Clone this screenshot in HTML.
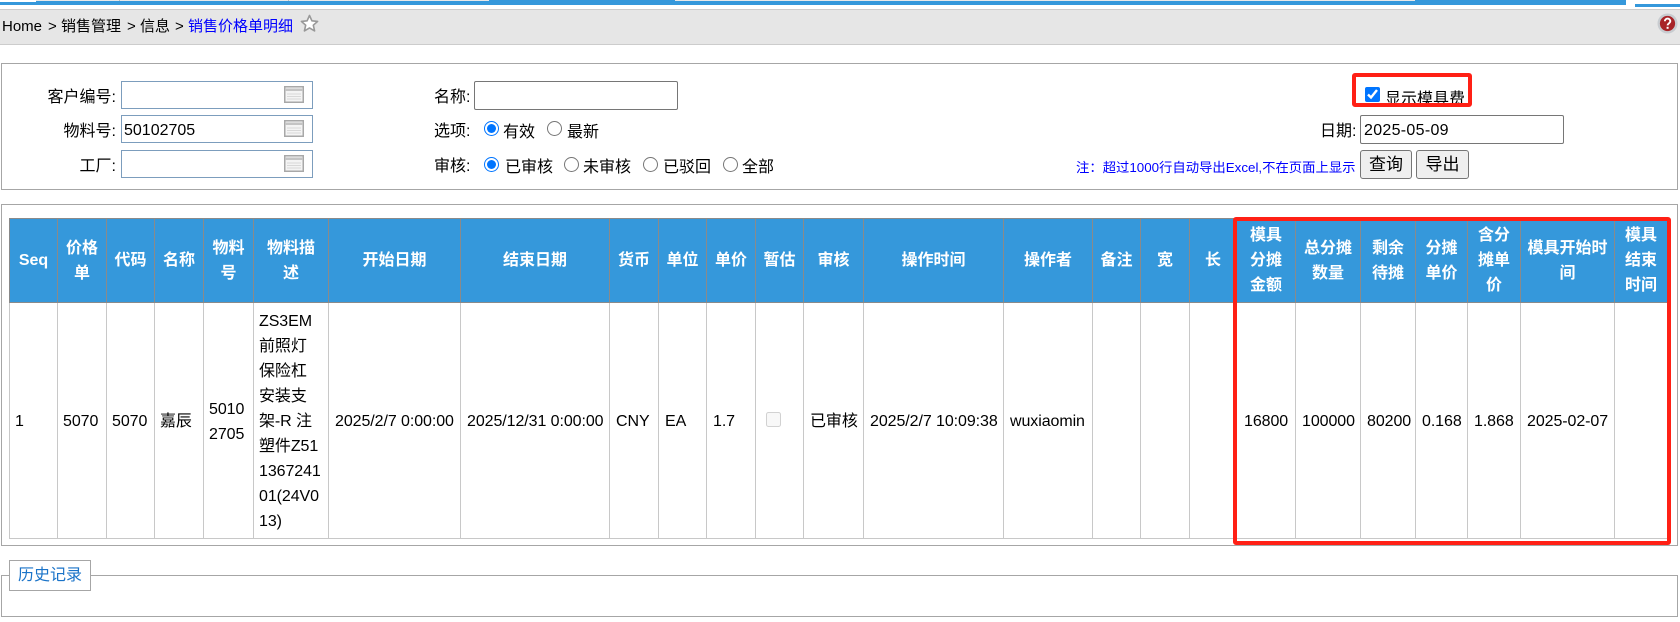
<!DOCTYPE html>
<html lang="zh">
<head>
<meta charset="utf-8">
<title>销售价格单明细</title>
<style>
html,body{margin:0;padding:0;background:#fff;width:1680px;height:622px;overflow:hidden}
body{position:relative;font-family:"Liberation Sans","Noto Sans CJK SC",sans-serif;font-size:16px;color:#000}
.a{position:absolute}
.t{position:absolute;white-space:nowrap;line-height:20px;height:20px}
.r{text-align:right}
.panel{position:absolute;border:1px solid #a6a6a6;box-sizing:border-box;background:#fff}
.ib{position:absolute;box-sizing:border-box;left:121px;width:192px;height:28px;border:1px solid #7c9dbd;background:#fff}
.in{position:absolute;box-sizing:border-box;border:1px solid #767676;border-radius:2px;background:#fff}
.btn{position:absolute;box-sizing:border-box;top:150px;height:29px;border:1px solid #767676;border-radius:3px;background:#efefef;text-align:center;line-height:27px;font-size:17px}
input{position:absolute;margin:0;width:15px;height:15px}
table{position:absolute;left:9px;top:218px;border-collapse:collapse;table-layout:fixed;width:1658px}
th{background:#3598db;color:#fff;font-size:16px;font-weight:bold;border:1px solid #8a8a8a;height:83px;padding:0 2px;line-height:25px;text-align:center;white-space:nowrap;overflow:hidden}
td{border:1px solid #c8c8c8;height:233px;padding:2px 0 0 6px;line-height:25px;white-space:nowrap;vertical-align:middle;font-size:16px;letter-spacing:-.08px;overflow:hidden}
td:nth-child(-n+6){padding-left:5px}
td:nth-child(19){padding-left:7px}
</style>
</head>
<body>
<!-- top tab strip -->
<div class="a" style="left:0;top:2px;width:36px;height:3px;background:#3598db"></div>
<div class="a" style="left:36px;top:1px;width:1379px;height:4px;background:#3598db"></div>
<div class="a" style="left:489px;top:0;width:186px;height:1px;background:#3598db"></div>
<div class="a" style="left:1415px;top:0;width:211px;height:5px;background:#3598db"></div>
<div class="a" style="left:36px;top:0;width:453px;height:1px;background:#e8e8e8"></div>
<div class="a" style="left:675px;top:0;width:740px;height:1px;background:#e8e8e8"></div>
<div class="a" style="left:119px;top:0;width:1px;height:1px;background:#bbb"></div>
<div class="a" style="left:288px;top:0;width:1px;height:1px;background:#bbb"></div>
<div class="a" style="left:1635px;top:4px;width:45px;height:3px;background:#3598db"></div>
<!-- breadcrumb -->
<div class="a" style="left:0;top:9px;width:1680px;height:36px;box-sizing:border-box;background:#e6e6e6;border-top:1px solid #ccc;border-bottom:1px solid #ccc"></div>
<div class="t" style="left:2px;top:17px;font-size:15px">Home</div>
<div class="t" style="left:48px;top:17px;font-size:15px">&gt;</div>
<div class="t" style="left:61px;top:17px;font-size:15px">销售管理</div>
<div class="t" style="left:127px;top:17px;font-size:15px">&gt;</div>
<div class="t" style="left:140px;top:17px;font-size:15px">信息</div>
<div class="t" style="left:175px;top:17px;font-size:15px">&gt;</div>
<div class="t" style="left:188px;top:17px;font-size:15px;color:#00f">销售价格单明细</div>
<svg class="a" style="left:300px;top:14px" width="19" height="19" viewBox="0 0 19 19"><path d="M9.5 1.5l2.4 5.3 5.7.6-4.3 3.8 1.3 5.7-5.1-3-5.1 3 1.3-5.7L1.400 7.400l5.700-.6z" fill="#fff" stroke="#999" stroke-width="1.600" stroke-linejoin="round"/></svg>
<svg class="a" style="left:1657px;top:13px" width="21" height="21" viewBox="0 0 21 21"><circle cx="10.500" cy="10.500" r="10" fill="#c8ccd0"/><circle cx="10.500" cy="10.500" r="7.600" fill="#a82428"/><path d="M7.900 8.300c0-3.600 5.400-3.600 5.400 0 0 2.100-2.700 2.100-2.700 4.100" fill="none" stroke="#fff" stroke-width="1.900"/><rect x="9.600" y="13.800" width="2" height="2" fill="#fff"/></svg>

<!-- filter panel -->
<div class="panel" style="left:1px;top:63px;width:1677px;height:127px"></div>
<div class="t r" style="right:1564px;top:88px">客户编号:</div>
<div class="t r" style="right:1564px;top:122px">物料号:</div>
<div class="t r" style="right:1564px;top:157px">工厂:</div>
<div class="ib" style="top:81px"></div>
<div class="ib" style="top:115px"></div>
<div class="ib" style="top:150px"></div>
<div class="t" style="left:124px;top:121px">50102705</div>
<svg class="a" style="left:284px;top:86px" width="20" height="17" viewBox="0 0 20 17"><rect x=".75" y=".75" width="18.500" height="15.500" fill="#f4f4f4" stroke="#a8a8a8" stroke-width="1.500"/><rect x="1" y="2.500" width="18" height="2.500" fill="#c4c4c4"/><path d="M3 8h14M3 10.500h14M3 13h14" stroke="#d8d8d8"/></svg>
<svg class="a" style="left:284px;top:120px" width="20" height="17" viewBox="0 0 20 17"><rect x=".75" y=".75" width="18.500" height="15.500" fill="#f4f4f4" stroke="#a8a8a8" stroke-width="1.500"/><rect x="1" y="2.500" width="18" height="2.500" fill="#c4c4c4"/><path d="M3 8h14M3 10.500h14M3 13h14" stroke="#d8d8d8"/></svg>
<svg class="a" style="left:284px;top:155px" width="20" height="17" viewBox="0 0 20 17"><rect x=".75" y=".75" width="18.500" height="15.500" fill="#f4f4f4" stroke="#a8a8a8" stroke-width="1.500"/><rect x="1" y="2.500" width="18" height="2.500" fill="#c4c4c4"/><path d="M3 8h14M3 10.500h14M3 13h14" stroke="#d8d8d8"/></svg>

<div class="t" style="left:434px;top:88px">名称:</div>
<div class="in" style="left:474px;top:81px;width:204px;height:29px"></div>
<div class="t" style="left:434px;top:122px">选项:</div>
<input type="radio" name="a" checked style="left:484px;top:121px">
<div class="t" style="left:503px;top:123px">有效</div>
<input type="radio" name="a" style="left:547px;top:121px">
<div class="t" style="left:567px;top:123px">最新</div>
<div class="t" style="left:434px;top:157px">审核:</div>
<input type="radio" name="b" checked style="left:484px;top:157px">
<div class="t" style="left:505px;top:158px">已审核</div>
<input type="radio" name="b" style="left:564px;top:157px">
<div class="t" style="left:583px;top:158px">未审核</div>
<input type="radio" name="b" style="left:643px;top:157px">
<div class="t" style="left:663px;top:158px">已驳回</div>
<input type="radio" name="b" style="left:723px;top:157px">
<div class="t" style="left:742px;top:158px">全部</div>

<div class="t" style="left:1076px;top:158px;font-size:13.350px;color:#00f">注：超过1000行自动导出Excel,不在页面上显示</div>
<div class="t" style="left:1320px;top:122px">日期:</div>
<div class="in" style="left:1360px;top:115px;width:204px;height:29px"></div>
<div class="t" style="left:1364px;top:121px;letter-spacing:.3px">2025-05-09</div>
<div class="btn" style="left:1360px;width:52px">查询</div>
<div class="btn" style="left:1416px;width:53px">导出</div>
<input type="checkbox" checked style="left:1365px;top:87px">
<div class="t" style="left:1385px;top:90px">显示模具费</div>
<div class="a" style="left:1352px;top:73px;width:120px;height:34px;box-sizing:border-box;border:4px solid #ff2015;border-radius:3px"></div>

<!-- data panel -->
<div class="panel" style="left:1px;top:204px;width:1677px;height:342px"></div>
<table>
<colgroup>
<col style="width:48px"><col style="width:49px"><col style="width:48px"><col style="width:49px"><col style="width:50px"><col style="width:75px"><col style="width:132px"><col style="width:149px"><col style="width:49px"><col style="width:48px"><col style="width:49px"><col style="width:48px"><col style="width:60px"><col style="width:140px"><col style="width:89px"><col style="width:48px"><col style="width:49px"><col style="width:47px"><col style="width:59px"><col style="width:65px"><col style="width:55px"><col style="width:52px"><col style="width:53px"><col style="width:94px"><col style="width:53px">
</colgroup>
<tr>
<th>Seq</th><th>价格<br>单</th><th>代码</th><th>名称</th><th>物料<br>号</th><th>物料描<br>述</th><th>开始日期</th><th>结束日期</th><th>货币</th><th>单位</th><th>单价</th><th>暂估</th><th>审核</th><th>操作时间</th><th>操作者</th><th>备注</th><th>宽</th><th>长</th><th>模具<br>分摊<br>金额</th><th>总分摊<br>数量</th><th>剩余<br>待摊</th><th>分摊<br>单价</th><th>含分<br>摊单<br>价</th><th>模具开始时<br>间</th><th>模具<br>结束<br>时间</th>
</tr>
<tr>
<td>1</td><td>5070</td><td>5070</td><td>嘉辰</td><td>5010<br>2705</td><td>ZS3EM<br>前照灯<br>保险杠<br>安装支<br>架-R 注<br>塑件Z51<br>1367241<br>01(24V0<br>13)</td><td>2025/2/7 0:00:00</td><td>2025/12/31 0:00:00</td><td>CNY</td><td>EA</td><td>1.7</td><td></td><td>已审核</td><td>2025/2/7 10:09:38</td><td>wuxiaomin</td><td></td><td></td><td></td><td>16800</td><td>100000</td><td>80200</td><td>0.168</td><td>1.868</td><td>2025-02-07</td><td></td>
</tr>
</table>
<input type="checkbox" disabled style="left:766px;top:412px">
<div class="a" style="left:1233px;top:217px;width:438px;height:328px;box-sizing:border-box;border:4px solid #ff2015;border-radius:3px"></div>

<!-- history -->
<div class="panel" style="left:1px;top:575px;width:1677px;height:42px"></div>
<div class="a" style="left:9px;top:560px;width:82px;height:31px;box-sizing:border-box;border:1px solid #a6a6a6;background:#fff;color:#1a73c8;text-align:center;line-height:29px">历史记录</div>
</body>
</html>
